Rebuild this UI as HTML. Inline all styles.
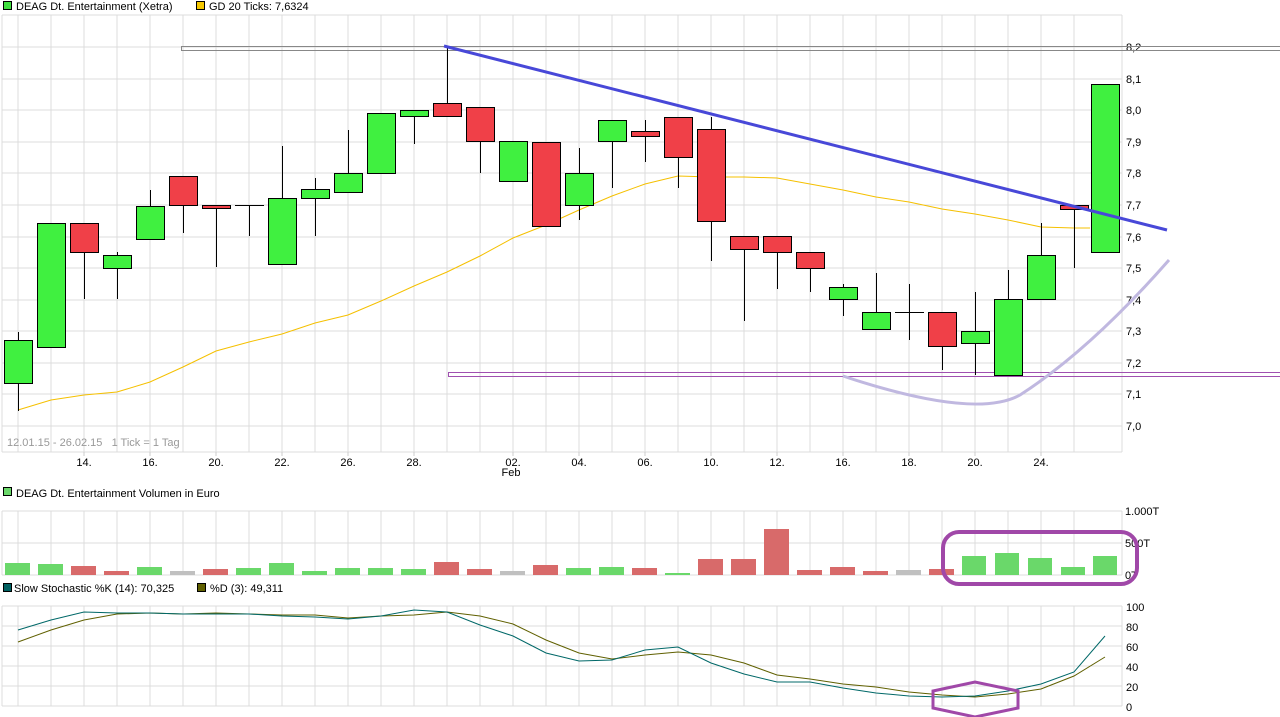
<!DOCTYPE html>
<html><head><meta charset="utf-8"><style>
html,body{margin:0;padding:0;background:#fff;width:1280px;height:717px;overflow:hidden}
svg text{font-family:"Liberation Sans",sans-serif;font-size:11px;fill:#000}
</style></head><body>
<svg width="1280" height="717" viewBox="0 0 1280 717" xmlns="http://www.w3.org/2000/svg">
<g shape-rendering="crispEdges">
<rect x="3.5" y="1.5" width="8" height="8" fill="#40e040" stroke="#000"/>
<text x="16" y="10">DEAG Dt. Entertainment (Xetra)</text>
<rect x="196.5" y="1.5" width="8" height="8" fill="#f5c800" stroke="#000"/>
<text x="209" y="10">GD 20 Ticks: 7,6324</text>
<g stroke="#dcdcdc">
<line x1="2" y1="15" x2="2" y2="452"/>
<line x1="18" y1="15" x2="18" y2="452"/><line x1="51" y1="15" x2="51" y2="452"/><line x1="84" y1="15" x2="84" y2="452"/><line x1="117" y1="15" x2="117" y2="452"/><line x1="150" y1="15" x2="150" y2="452"/><line x1="183" y1="15" x2="183" y2="452"/><line x1="216" y1="15" x2="216" y2="452"/><line x1="249" y1="15" x2="249" y2="452"/><line x1="282" y1="15" x2="282" y2="452"/><line x1="315" y1="15" x2="315" y2="452"/><line x1="348" y1="15" x2="348" y2="452"/><line x1="381" y1="15" x2="381" y2="452"/><line x1="414" y1="15" x2="414" y2="452"/><line x1="447" y1="15" x2="447" y2="452"/><line x1="480" y1="15" x2="480" y2="452"/><line x1="513" y1="15" x2="513" y2="452"/><line x1="546" y1="15" x2="546" y2="452"/><line x1="579" y1="15" x2="579" y2="452"/><line x1="612" y1="15" x2="612" y2="452"/><line x1="645" y1="15" x2="645" y2="452"/><line x1="678" y1="15" x2="678" y2="452"/><line x1="711" y1="15" x2="711" y2="452"/><line x1="744" y1="15" x2="744" y2="452"/><line x1="777" y1="15" x2="777" y2="452"/><line x1="810" y1="15" x2="810" y2="452"/><line x1="843" y1="15" x2="843" y2="452"/><line x1="876" y1="15" x2="876" y2="452"/><line x1="909" y1="15" x2="909" y2="452"/><line x1="942" y1="15" x2="942" y2="452"/><line x1="975" y1="15" x2="975" y2="452"/><line x1="1008" y1="15" x2="1008" y2="452"/><line x1="1041" y1="15" x2="1041" y2="452"/><line x1="1074" y1="15" x2="1074" y2="452"/><line x1="1122" y1="15" x2="1122" y2="452"/>
<line x1="2" y1="15" x2="1122" y2="15"/><line x1="2" y1="47" x2="1122" y2="47"/><line x1="2" y1="79" x2="1122" y2="79"/><line x1="2" y1="110" x2="1122" y2="110"/><line x1="2" y1="142" x2="1122" y2="142"/><line x1="2" y1="173" x2="1122" y2="173"/><line x1="2" y1="205" x2="1122" y2="205"/><line x1="2" y1="237" x2="1122" y2="237"/><line x1="2" y1="268" x2="1122" y2="268"/><line x1="2" y1="300" x2="1122" y2="300"/><line x1="2" y1="331" x2="1122" y2="331"/><line x1="2" y1="363" x2="1122" y2="363"/><line x1="2" y1="394" x2="1122" y2="394"/><line x1="2" y1="426" x2="1122" y2="426"/><line x1="2" y1="452" x2="1122" y2="452"/>
</g>
<g stroke="#ccc">
<line x1="84" y1="452" x2="84" y2="456"/><line x1="150" y1="452" x2="150" y2="456"/><line x1="216" y1="452" x2="216" y2="456"/><line x1="282" y1="452" x2="282" y2="456"/><line x1="348" y1="452" x2="348" y2="456"/><line x1="414" y1="452" x2="414" y2="456"/><line x1="513" y1="452" x2="513" y2="456"/><line x1="579" y1="452" x2="579" y2="456"/><line x1="645" y1="452" x2="645" y2="456"/><line x1="711" y1="452" x2="711" y2="456"/><line x1="777" y1="452" x2="777" y2="456"/><line x1="843" y1="452" x2="843" y2="456"/><line x1="909" y1="452" x2="909" y2="456"/><line x1="975" y1="452" x2="975" y2="456"/><line x1="1041" y1="452" x2="1041" y2="456"/>
</g>
</g>
<text x="7" y="446" style="fill:#999;white-space:pre">12.01.15 - 26.02.15   1 Tick = 1 Tag</text>
<g text-anchor="middle">
<text x="84" y="466">14.</text><text x="150" y="466">16.</text><text x="216" y="466">20.</text><text x="282" y="466">22.</text><text x="348" y="466">26.</text><text x="414" y="466">28.</text><text x="513" y="466">02.</text><text x="511" y="476">Feb</text><text x="579" y="466">04.</text><text x="645" y="466">06.</text><text x="711" y="466">10.</text><text x="777" y="466">12.</text><text x="843" y="466">16.</text><text x="909" y="466">18.</text><text x="975" y="466">20.</text><text x="1041" y="466">24.</text>
</g>
<g>
<text x="1126" y="51">8,2</text><text x="1126" y="83">8,1</text><text x="1126" y="114">8,0</text><text x="1126" y="146">7,9</text><text x="1126" y="177">7,8</text><text x="1126" y="209">7,7</text><text x="1126" y="241">7,6</text><text x="1126" y="272">7,5</text><text x="1126" y="304">7,4</text><text x="1126" y="335">7,3</text><text x="1126" y="367">7,2</text><text x="1126" y="398">7,1</text><text x="1126" y="430">7,0</text>
</g>
<rect x="181.5" y="46.5" width="1100" height="4" fill="none" stroke="#888" shape-rendering="crispEdges"/>
<rect x="448.5" y="372.5" width="840" height="4" fill="none" stroke="#a050b0" shape-rendering="crispEdges"/>
<polyline fill="none" stroke="#f5c000" stroke-width="1" points="18,410 51,400 84,395 117,392 150,382 183,367 216,351 249,342 282,334 315,323 348,315 381,301 414,286 447,272 480,256 513,238 546,225 579,210 612,196 645,184 678,176 711,177 744,177 777,178 810,184 843,190 876,197 909,202 942,209 975,214 1008,220 1041,227 1074,228 1090,228"/>
<g stroke="#000" shape-rendering="crispEdges">
<line x1="18.5" y1="332" x2="18.5" y2="411"/><line x1="84.5" y1="252" x2="84.5" y2="299"/><line x1="117.5" y1="252" x2="117.5" y2="299"/><line x1="150.5" y1="190" x2="150.5" y2="239"/><line x1="183.5" y1="205" x2="183.5" y2="233"/><line x1="216.5" y1="205" x2="216.5" y2="267"/><line x1="249.5" y1="205" x2="249.5" y2="236"/><line x1="282.5" y1="146" x2="282.5" y2="264"/><line x1="315.5" y1="178" x2="315.5" y2="236"/><line x1="348.5" y1="130" x2="348.5" y2="192"/><line x1="414.5" y1="110" x2="414.5" y2="144"/><line x1="447.5" y1="47" x2="447.5" y2="116"/><line x1="480.5" y1="141" x2="480.5" y2="173"/><line x1="579.5" y1="148" x2="579.5" y2="220"/><line x1="612.5" y1="120" x2="612.5" y2="188"/><line x1="645.5" y1="120" x2="645.5" y2="162"/><line x1="678.5" y1="117" x2="678.5" y2="188"/><line x1="711.5" y1="117" x2="711.5" y2="261"/><line x1="744.5" y1="236" x2="744.5" y2="321"/><line x1="777.5" y1="236" x2="777.5" y2="289"/><line x1="810.5" y1="252" x2="810.5" y2="292"/><line x1="843.5" y1="284" x2="843.5" y2="316"/><line x1="876.5" y1="273" x2="876.5" y2="329"/><line x1="909.5" y1="284" x2="909.5" y2="340"/><line x1="942.5" y1="312" x2="942.5" y2="370"/><line x1="975.5" y1="292" x2="975.5" y2="375"/><line x1="1008.5" y1="270" x2="1008.5" y2="375"/><line x1="1041.5" y1="223" x2="1041.5" y2="299"/><line x1="1074.5" y1="205" x2="1074.5" y2="268"/><line x1="1105.5" y1="84" x2="1105.5" y2="252"/>
<g fill="#40f040">
<rect x="4.5" y="340.5" width="28" height="43"/><rect x="37.5" y="223.5" width="28" height="124"/><rect x="103.5" y="255.5" width="28" height="13"/><rect x="136.5" y="206.5" width="28" height="33"/><rect x="268.5" y="198.5" width="28" height="66"/><rect x="301.5" y="189.5" width="28" height="9"/><rect x="334.5" y="173.5" width="28" height="19"/><rect x="367.5" y="113.5" width="28" height="60"/><rect x="400.5" y="110.5" width="28" height="6"/><rect x="499.5" y="141.5" width="28" height="40"/><rect x="565.5" y="173.5" width="28" height="32"/><rect x="598.5" y="120.5" width="28" height="21"/><rect x="829.5" y="287.5" width="28" height="12"/><rect x="862.5" y="312.5" width="28" height="17"/><rect x="961.5" y="331.5" width="28" height="12"/><rect x="994.5" y="299.5" width="28" height="76"/><rect x="1027.5" y="255.5" width="28" height="44"/><rect x="1091.5" y="84.5" width="28" height="168"/>
</g>
<g fill="#f04048">
<rect x="70.5" y="223.5" width="28" height="29"/><rect x="169.5" y="176.5" width="28" height="29"/><rect x="202.5" y="205.5" width="28" height="3"/><rect x="433.5" y="103.5" width="28" height="13"/><rect x="466.5" y="107.5" width="28" height="34"/><rect x="532.5" y="142.5" width="28" height="84"/><rect x="631.5" y="131.5" width="28" height="5"/><rect x="664.5" y="117.5" width="28" height="40"/><rect x="697.5" y="129.5" width="28" height="92"/><rect x="730.5" y="236.5" width="28" height="13"/><rect x="763.5" y="236.5" width="28" height="16"/><rect x="796.5" y="252.5" width="28" height="16"/><rect x="928.5" y="312.5" width="28" height="34"/><rect x="1060.5" y="205.5" width="28" height="4"/>
</g>
<line x1="235" y1="205.5" x2="264" y2="205.5"/><line x1="895" y1="312.5" x2="924" y2="312.5"/>
</g>
<line x1="444" y1="46" x2="1167" y2="230" stroke="#4848d8" stroke-width="3"/>
<path d="M843,376 Q975,420 1020,395 Q1090,350 1169,260" fill="none" stroke="#c0b8e0" stroke-width="3"/>

<rect x="3.5" y="487.5" width="8" height="8" fill="#6ad86a" stroke="#000" shape-rendering="crispEdges"/>
<text x="16" y="497">DEAG Dt. Entertainment Volumen in Euro</text>
<g stroke="#dcdcdc" shape-rendering="crispEdges">
<line x1="2" y1="511" x2="1122" y2="511"/><line x1="2" y1="543" x2="1122" y2="543"/><line x1="2" y1="575" x2="1122" y2="575"/>
<line x1="2" y1="511" x2="2" y2="575"/><line x1="18" y1="511" x2="18" y2="575"/><line x1="51" y1="511" x2="51" y2="575"/><line x1="84" y1="511" x2="84" y2="575"/><line x1="117" y1="511" x2="117" y2="575"/><line x1="150" y1="511" x2="150" y2="575"/><line x1="183" y1="511" x2="183" y2="575"/><line x1="216" y1="511" x2="216" y2="575"/><line x1="249" y1="511" x2="249" y2="575"/><line x1="282" y1="511" x2="282" y2="575"/><line x1="315" y1="511" x2="315" y2="575"/><line x1="348" y1="511" x2="348" y2="575"/><line x1="381" y1="511" x2="381" y2="575"/><line x1="414" y1="511" x2="414" y2="575"/><line x1="447" y1="511" x2="447" y2="575"/><line x1="480" y1="511" x2="480" y2="575"/><line x1="513" y1="511" x2="513" y2="575"/><line x1="546" y1="511" x2="546" y2="575"/><line x1="579" y1="511" x2="579" y2="575"/><line x1="612" y1="511" x2="612" y2="575"/><line x1="645" y1="511" x2="645" y2="575"/><line x1="678" y1="511" x2="678" y2="575"/><line x1="711" y1="511" x2="711" y2="575"/><line x1="744" y1="511" x2="744" y2="575"/><line x1="777" y1="511" x2="777" y2="575"/><line x1="810" y1="511" x2="810" y2="575"/><line x1="843" y1="511" x2="843" y2="575"/><line x1="876" y1="511" x2="876" y2="575"/><line x1="909" y1="511" x2="909" y2="575"/><line x1="942" y1="511" x2="942" y2="575"/><line x1="975" y1="511" x2="975" y2="575"/><line x1="1008" y1="511" x2="1008" y2="575"/><line x1="1041" y1="511" x2="1041" y2="575"/><line x1="1074" y1="511" x2="1074" y2="575"/><line x1="1122" y1="511" x2="1122" y2="575"/>
</g>
<g shape-rendering="crispEdges">
<rect x="5" y="563" width="25" height="12" fill="#6ad86a"/><rect x="38" y="564" width="25" height="11" fill="#6ad86a"/><rect x="71" y="566" width="25" height="9" fill="#d86a6a"/><rect x="104" y="571" width="25" height="4" fill="#d86a6a"/><rect x="137" y="567" width="25" height="8" fill="#6ad86a"/><rect x="170" y="571" width="25" height="4" fill="#c0c0c0"/><rect x="203" y="569" width="25" height="6" fill="#d86a6a"/><rect x="236" y="568" width="25" height="7" fill="#6ad86a"/><rect x="269" y="563" width="25" height="12" fill="#6ad86a"/><rect x="302" y="571" width="25" height="4" fill="#6ad86a"/><rect x="335" y="568" width="25" height="7" fill="#6ad86a"/><rect x="368" y="568" width="25" height="7" fill="#6ad86a"/><rect x="401" y="569" width="25" height="6" fill="#6ad86a"/><rect x="434" y="562" width="25" height="13" fill="#d86a6a"/><rect x="467" y="569" width="25" height="6" fill="#d86a6a"/><rect x="500" y="571" width="25" height="4" fill="#c0c0c0"/><rect x="533" y="565" width="25" height="10" fill="#d86a6a"/><rect x="566" y="568" width="25" height="7" fill="#6ad86a"/><rect x="599" y="567" width="25" height="8" fill="#6ad86a"/><rect x="632" y="568" width="25" height="7" fill="#d86a6a"/><rect x="665" y="573" width="25" height="2" fill="#6ad86a"/><rect x="698" y="559" width="25" height="16" fill="#d86a6a"/><rect x="731" y="559" width="25" height="16" fill="#d86a6a"/><rect x="764" y="529" width="25" height="46" fill="#d86a6a"/><rect x="797" y="570" width="25" height="5" fill="#d86a6a"/><rect x="830" y="567" width="25" height="8" fill="#d86a6a"/><rect x="863" y="571" width="25" height="4" fill="#d86a6a"/><rect x="896" y="570" width="25" height="5" fill="#c0c0c0"/><rect x="929" y="569" width="25" height="6" fill="#d86a6a"/><rect x="962" y="556" width="24" height="19" fill="#6ad86a"/><rect x="995" y="553" width="24" height="22" fill="#6ad86a"/><rect x="1028" y="558" width="24" height="17" fill="#6ad86a"/><rect x="1061" y="567" width="24" height="8" fill="#6ad86a"/><rect x="1093" y="556" width="24" height="19" fill="#6ad86a"/>
</g>
<text x="1125" y="515">1.000T</text><text x="1125" y="547">500T</text><text x="1125" y="579">0T</text>
<rect x="943" y="532" width="194" height="52" rx="16" fill="none" stroke="#a048a8" stroke-width="4"/>

<rect x="3.5" y="583.5" width="8" height="8" fill="#006060" stroke="#000" shape-rendering="crispEdges"/>
<text x="14" y="592">Slow Stochastic %K (14): 70,325</text>
<rect x="197.5" y="583.5" width="8" height="8" fill="#606000" stroke="#000" shape-rendering="crispEdges"/>
<text x="210" y="592">%D (3): 49,311</text>
<g stroke="#dcdcdc" shape-rendering="crispEdges">
<line x1="2" y1="606" x2="1122" y2="606"/><line x1="2" y1="626" x2="1122" y2="626"/><line x1="2" y1="646" x2="1122" y2="646"/><line x1="2" y1="666" x2="1122" y2="666"/><line x1="2" y1="686" x2="1122" y2="686"/><line x1="2" y1="706" x2="1122" y2="706"/>
<line x1="2" y1="606" x2="2" y2="706"/><line x1="18" y1="606" x2="18" y2="706"/><line x1="51" y1="606" x2="51" y2="706"/><line x1="84" y1="606" x2="84" y2="706"/><line x1="117" y1="606" x2="117" y2="706"/><line x1="150" y1="606" x2="150" y2="706"/><line x1="183" y1="606" x2="183" y2="706"/><line x1="216" y1="606" x2="216" y2="706"/><line x1="249" y1="606" x2="249" y2="706"/><line x1="282" y1="606" x2="282" y2="706"/><line x1="315" y1="606" x2="315" y2="706"/><line x1="348" y1="606" x2="348" y2="706"/><line x1="381" y1="606" x2="381" y2="706"/><line x1="414" y1="606" x2="414" y2="706"/><line x1="447" y1="606" x2="447" y2="706"/><line x1="480" y1="606" x2="480" y2="706"/><line x1="513" y1="606" x2="513" y2="706"/><line x1="546" y1="606" x2="546" y2="706"/><line x1="579" y1="606" x2="579" y2="706"/><line x1="612" y1="606" x2="612" y2="706"/><line x1="645" y1="606" x2="645" y2="706"/><line x1="678" y1="606" x2="678" y2="706"/><line x1="711" y1="606" x2="711" y2="706"/><line x1="744" y1="606" x2="744" y2="706"/><line x1="777" y1="606" x2="777" y2="706"/><line x1="810" y1="606" x2="810" y2="706"/><line x1="843" y1="606" x2="843" y2="706"/><line x1="876" y1="606" x2="876" y2="706"/><line x1="909" y1="606" x2="909" y2="706"/><line x1="942" y1="606" x2="942" y2="706"/><line x1="975" y1="606" x2="975" y2="706"/><line x1="1008" y1="606" x2="1008" y2="706"/><line x1="1041" y1="606" x2="1041" y2="706"/><line x1="1074" y1="606" x2="1074" y2="706"/><line x1="1122" y1="606" x2="1122" y2="706"/>
</g>
<polyline fill="none" stroke="#606000" points="18,642 51,630 84,620 117,614 150,613 183,614 216,613 249,614 282,615 315,615 348,618 381,616 414,615 447,612 480,616 513,624 546,640 579,653 612,659 645,655 678,652 711,655 744,663 777,675 810,679 843,684 876,687 909,692 942,695 975,697 1008,694 1041,689 1074,676 1105,657"/>
<polyline fill="none" stroke="#006868" points="18,630 51,620 84,612 117,613 150,613 183,614 216,614 249,614 282,616 315,617 348,619 381,616 414,610 447,612 480,625 513,636 546,653 579,661 612,660 645,650 678,647 711,663 744,674 777,682 810,682 843,688 876,693 909,696 942,697 975,696 1008,691 1041,684 1074,672 1105,636"/>
<text x="1126" y="611">100</text><text x="1126" y="631">80</text><text x="1126" y="651">60</text><text x="1126" y="671">40</text><text x="1126" y="691">20</text><text x="1126" y="711">0</text>
<polygon points="933,691 975,682 1018,691 1018,708 975,717 933,708" fill="none" stroke="#a048a8" stroke-width="3"/>
</svg>
</body></html>
